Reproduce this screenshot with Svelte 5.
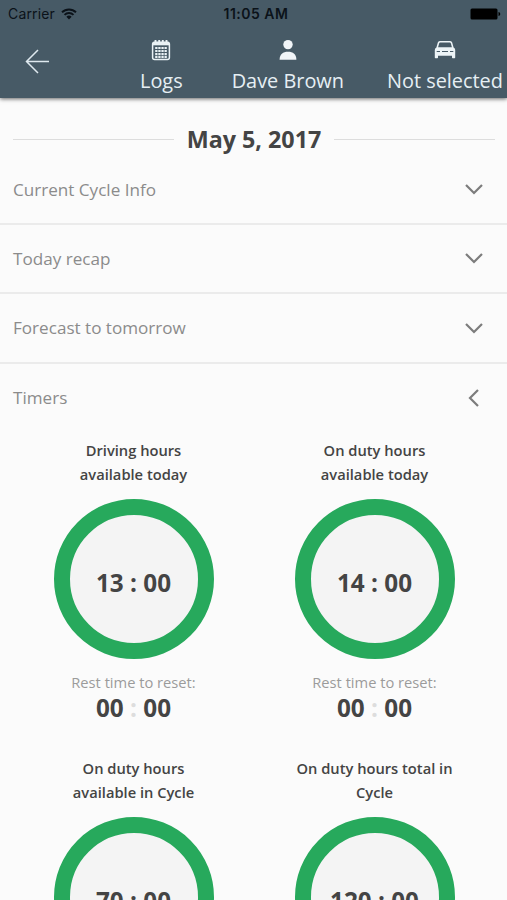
<script lang="ts">
	type Timer = { title: string; hours: string; minutes: string };

	const sections = ['Current Cycle Info', 'Today recap', 'Forecast to tomorrow', 'Timers'];
	let opened = $state('Timers');

	const timers: Timer[] = [
		{ title: 'Driving hours available today', hours: '13', minutes: '00' },
		{ title: 'On duty hours available today', hours: '14', minutes: '00' },
		{ title: 'On duty hours available in Cycle', hours: '70', minutes: '00' },
		{ title: 'On duty hours total in Cycle', hours: '120', minutes: '00' }
	];
</script>

<div class="screen">
	<header>
		<div class="status">
			<div class="carrier">
				<span>Carrier</span>
				<svg width="16" height="12" viewBox="0 0 16 12" fill="none" stroke="#0b1219" stroke-width="1.9">
					<path d="M1 4.3a10 10 0 0 1 14 0" />
					<path d="M3.5 6.9a6.4 6.4 0 0 1 9 0" />
					<path d="M8 11.4L5.4 8.8a3.7 3.7 0 0 1 5.2 0z" fill="#0b1219" stroke="none" />
				</svg>
			</div>
			<span class="clock">11:05 AM</span>
			<div class="battery">
				<svg width="31" height="12" viewBox="0 0 31 12">
					<rect x="0.5" y="0.5" width="27" height="11" rx="1.5" />
					<path d="M28.5 4c2.3.3 2.3 3.7 0 4z" />
				</svg>
			</div>
		</div>

		<nav>
			<button class="back" aria-label="Back">
				<svg width="25" height="25" viewBox="0 0 25 25" fill="none" stroke="#dfe9ef" stroke-width="1.5">
					<path d="M24 12.5H1.5M13 1L1.5 12.5 13 24" />
				</svg>
			</button>
			<button class="tab">
				<svg width="20" height="22" viewBox="0 0 20 22" fill="none" stroke="#e9f1f5">
					<rect x="1.6" y="3.2" width="16.8" height="17.2" rx="2" stroke-width="1.5" />
					<path d="M2 4.6h16" stroke-width="3.4" />
					<path d="M4.5 1v4M8.2 1v4M11.8 1v4M15.5 1v4" stroke-width="1.9" />
					<path d="M4.2 9h11.6M4.2 12h11.6M4.2 15h11.6M4.2 17.8h11.6" stroke-width="2.2" stroke-dasharray="2.3 0.8" />
				</svg>
				<span>Logs</span>
			</button>
			<button class="tab driver">
				<svg width="20" height="22" viewBox="0 0 20 22" fill="#f1f5f8">
					<circle cx="10" cy="5.6" r="4.7" />
					<path d="M1.6 20.7c0-5.5 3.3-8 8.4-8s8.4 2.5 8.4 8z" />
				</svg>
				<span>Dave Brown</span>
			</button>
			<button class="tab vehicle">
				<svg width="22" height="22" viewBox="0 0 22 22" fill="#edf4f7">
					<path
						fill-rule="evenodd"
						d="M5.8 2h10.4q1.6 0 2 1.5l1.4 4.9q1.6.7 1.6 2.5v7.7q0 .7-.7.7h-1.8q-.7 0-.7-.7v-1.8H4v1.8q0 .7-.7.7H1.5q-.7 0-.7-.7v-7.7q0-1.800 1.6-2.500l1.400-4.900Q4.200 2 5.800 2zM6.100 3.500q-.7 0-.9.7l-1.100 4h13.800l-1.100-4q-.2-.7-.9-.7zM2.700 11.900v1.200h3.300v-1.200zM8 11.900v1.200h6v-1.200zM16 11.900v1.200h3.300v-1.200z"
					/>
				</svg>
				<span>Not selected</span>
			</button>
		</nav>
	</header>

	<h1>May 5, 2017</h1>

	{#each sections as section}
		<button class="section" onclick={() => (opened = section)}>
			<span>{section}</span>
			<svg class:open={opened === section} width="20" height="20" viewBox="0 0 20 20" fill="none" stroke="#7c7c7c" stroke-width="2.2">
				<path d="M2 6l8 8 8-8" />
			</svg>
		</button>
	{/each}

	<div class="timers">
		{#each timers as timer}
			<div class="timer">
				<h2>{timer.title}</h2>
				<div class="ring">{timer.hours} : {timer.minutes}</div>
				<p>Rest time to reset:</p>
				<div class="reset">00 <span>:</span> 00</div>
			</div>
		{/each}
	</div>
</div>

<style>
	:global(body) {
		margin: 0;
	}

	.screen {
		width: 100%;
		height: 900px;
		overflow: hidden;
		background: #fbfbfb;
		color: #444;
		font-family: 'Open Sans', sans-serif;
	}

	button {
		padding: 0;
		border: none;
		background: transparent;
		font-family: inherit;
	}

	svg {
		display: block;
	}

	header {
		height: 98px;
		background: #475a66;
		box-shadow: 0 1px 4px rgba(0, 0, 0, 0.6);
	}

	.status {
		display: grid;
		grid-template-columns: 1fr auto 1fr;
		align-items: center;
		height: 27px;
		padding: 0 6px 0 8px;
		color: #0b1219;
		font-family: Inter, sans-serif;
		font-size: 14px;
	}
	.carrier {
		display: flex;
		align-items: center;
		gap: 6px;
		letter-spacing: 0.15px;
	}
	.clock {
		margin-left: 3px;
		font-weight: 600;
		letter-spacing: 0.5px;
	}
	.battery {
		justify-self: end;
	}

	nav {
		display: flex;
		height: 71px;
		color: #e6eff4;
	}
	.back {
		width: 25px;
		margin: 0 90px 0 25px;
		padding-bottom: 2px;
	}
	.tab {
		display: flex;
		flex-direction: column;
		align-items: center;
		padding-top: 12px;
		color: inherit;
		font-size: 19.9px;
		line-height: 28px;
		white-space: nowrap;
	}
	.tab span {
		margin-top: 6px;
	}
	.driver {
		margin-left: 49px;
	}
	.vehicle {
		margin-left: 43px;
	}

	h1 {
		display: flex;
		align-items: center;
		gap: 13px;
		height: 34px;
		margin: 24px 12px 0 13px;
		font-size: 23.3px;
		font-weight: 700;
		line-height: 34px;
	}
	h1::before,
	h1::after {
		content: '';
		flex: 1;
		height: 1px;
		background: #ddd;
	}

	.section {
		display: flex;
		align-items: center;
		justify-content: space-between;
		box-sizing: border-box;
		width: 100%;
		height: 69.6px;
		padding: 0 23px 0 13px;
		border-bottom: 2px solid #ebebeb;
		color: #8b8b8b;
		font-size: 17.1px;
	}
	h1 + .section {
		height: 68.6px;
	}
	.section:last-of-type {
		border-bottom-color: transparent;
	}
	.open {
		transform: rotate(90deg);
	}

	.timers {
		display: grid;
		grid-template-columns: 1fr 1fr;
		padding: 5px 12px 0 13px;
		text-align: center;
	}
	.timer {
		height: 318px;
	}
	h2 {
		width: 160px;
		margin: 0 auto;
		font-size: 14.7px;
		font-weight: 600;
		line-height: 24px;
	}
	.ring {
		box-sizing: border-box;
		width: 160px;
		height: 160px;
		margin: 12.5px auto 0;
		padding-top: 8px;
		border: 16px solid #27a95c;
		border-radius: 50%;
		background: #f4f4f4;
		font-size: 24.3px;
		font-weight: 700;
		line-height: 120px;
	}
	p {
		margin: 12px 0 0;
		color: #9b9b9b;
		font-size: 14.7px;
		line-height: 22px;
	}
	.reset {
		font-size: 24.3px;
		font-weight: 700;
		line-height: 30px;
	}
	.reset span {
		color: #ddd;
	}
</style>
